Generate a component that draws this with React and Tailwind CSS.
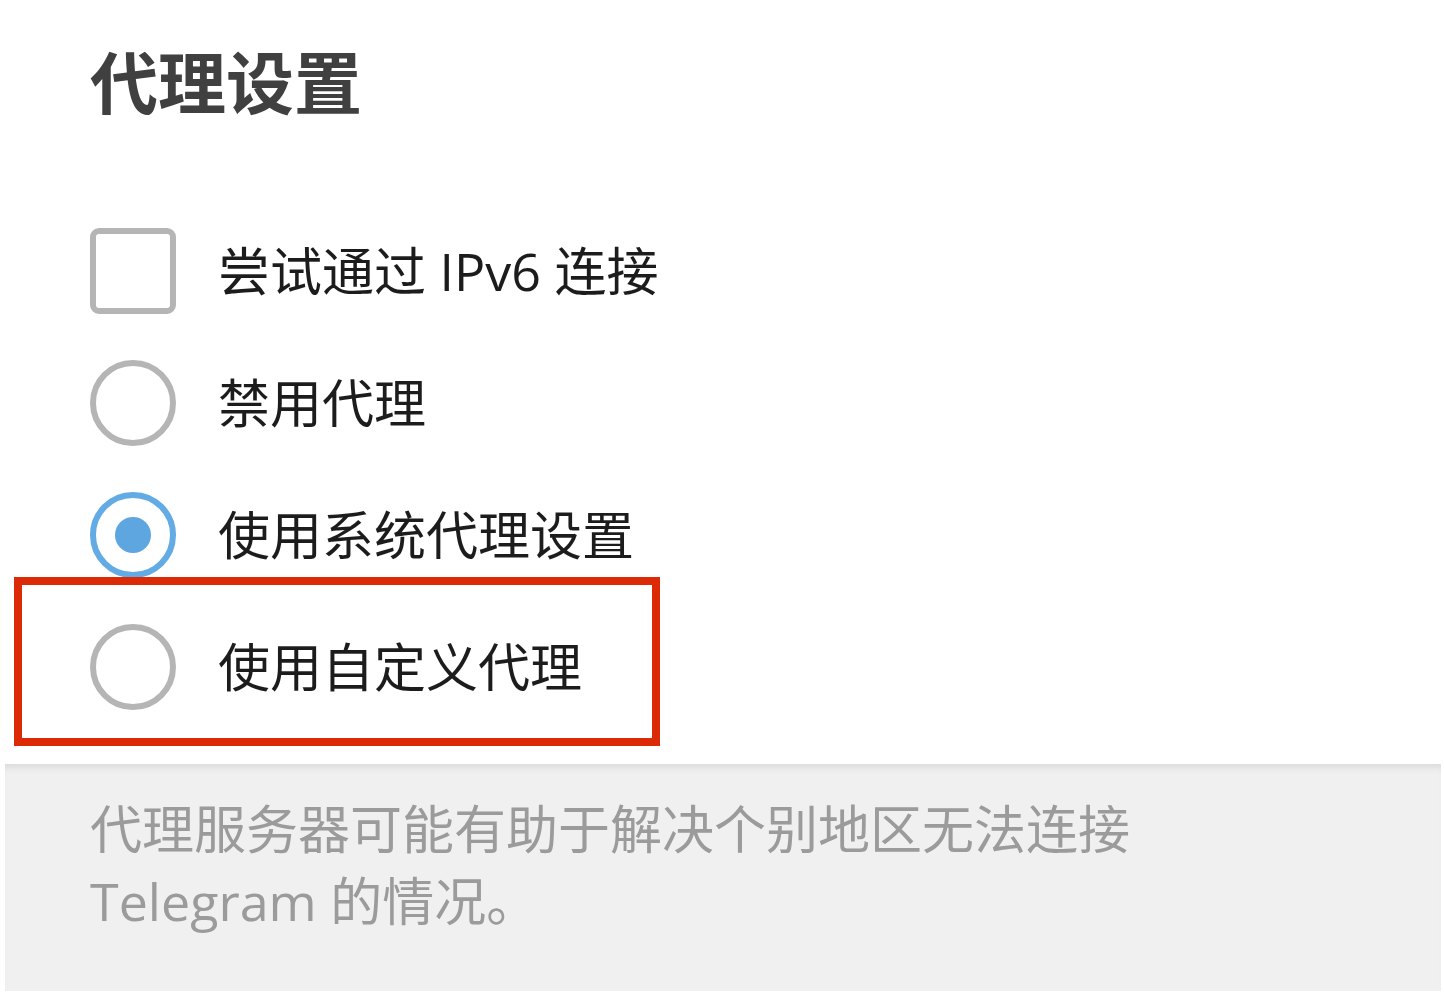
export default function App() {
  const font = { fontFamily: '"Open Sans", "Noto Sans CJK SC", sans-serif' };
  return (
    <div className="w-[1445px] h-[997px] bg-white overflow-hidden" style={font}>
      <div className="pl-[90px] pt-[38px]">
        <h1 className="text-[68px] leading-[90px] font-bold text-[#404040]">代理设置</h1>
      </div>
      <div className="pl-[90px] mt-[77px] flex flex-col">
        <div className="h-[132px] flex items-center gap-[42px]">
          <div className="w-[86px] h-[86px] rounded-[9px] border-[6px] border-[#b5b5b5]" />
          <span className="text-[52px] leading-none text-[#1c1c1c]">尝试通过 IPv6 连接</span>
        </div>
        <div className="h-[132px] flex items-center gap-[42px]">
          <div className="w-[86px] h-[86px] rounded-full border-[6px] border-[#b5b5b5]" />
          <span className="text-[52px] leading-none text-[#1c1c1c]">禁用代理</span>
        </div>
        <div className="h-[132px] flex items-center gap-[42px]">
          <div className="w-[86px] h-[86px] rounded-full border-[6px] border-[#62abe4] flex items-center justify-center">
            <div className="w-[36px] h-[36px] rounded-full bg-[#5ea6e0]" />
          </div>
          <span className="text-[52px] leading-none text-[#1c1c1c]">使用系统代理设置</span>
        </div>
        <div className="relative h-[132px] flex items-center gap-[42px]">
          <div className="w-[86px] h-[86px] rounded-full border-[6px] border-[#b5b5b5]" />
          <span className="text-[52px] leading-none text-[#1c1c1c]">使用自定义代理</span>
          <div className="absolute left-[-76px] top-[-24px] w-[646px] h-[169px] border-[8px] border-[#dc2a06] pointer-events-none" />
        </div>
      </div>
      <div className="ml-[5px] mt-[31px] w-[1436px] h-[227px] bg-[#f0f0f0] shadow-[inset_0_8px_8px_-6px_rgba(0,0,0,0.12)] pl-[85px] pt-[29px]">
        <p className="text-[52px] leading-[72px] text-[#9b9b9b]">
          代理服务器可能有助于解决个别地区无法连接
          <br />
          Telegram 的情况。
        </p>
      </div>
    </div>
  );
}
